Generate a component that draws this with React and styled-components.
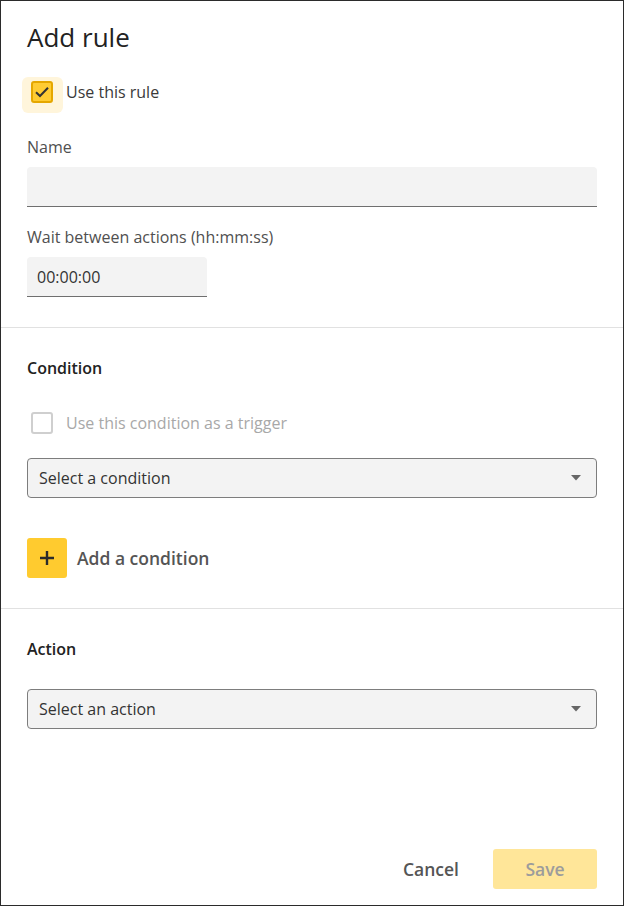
import React from 'react';
import styled, { createGlobalStyle } from 'styled-components';

const GlobalStyle = createGlobalStyle`
  html, body {
    margin: 0;
    padding: 0;
    background: #fff;
  }
  * {
    box-sizing: border-box;
  }
`;

const Dialog = styled.div`
  width: 624px;
  height: 906px;
  border: 1px solid #2b2b2b;
  display: flex;
  flex-direction: column;
  font-family: 'Open Sans', 'Noto Sans', sans-serif;
  color: #333;
  background: #fff;
`;

const Section = styled.section`
  padding: ${props => (props.first ? '18px 26px 30px' : '29px 26px 30px')};
  border-top: ${props => (props.first ? 'none' : '1px solid #e1e1e1')};
  display: flex;
  flex-direction: column;
`;

const Title = styled.h1`
  margin: 0 0 26px;
  font-size: 26px;
  line-height: 36px;
  font-weight: 400;
  color: #222;
`;

const Heading = styled.h2`
  margin: 0;
  font-size: 16px;
  line-height: 22px;
  font-weight: 600;
  color: #222;
`;

const CheckRow = styled.label`
  isolation: isolate;
  display: flex;
  align-items: center;
  gap: 13px;
  padding-left: 4px;
  height: 22px;
  font-size: 16px;
  color: ${props => (props.disabled ? '#a8a8a8' : '#3a3a3a')};
  margin-top: ${props => props.mt || 0}px;
`;

const Box = styled.span`
  position: relative;
  width: 22px;
  height: 22px;
  border-radius: 3px;
  display: flex;
  align-items: center;
  justify-content: center;
  border: 2px solid ${props => (props.checked ? '#e5a700' : '#cfcfcf')};
  background: ${props => (props.checked ? '#ffcc33' : '#fff')};

  &::before {
    content: ${props => (props.checked ? "''" : 'none')};
    position: absolute;
    top: -6px;
    left: -11px;
    right: -12px;
    bottom: -12px;
    background: #fff5db;
    border-radius: 6px;
    z-index: -1;
  }
`;

const Field = styled.div`
  display: flex;
  flex-direction: column;
  margin-top: ${props => props.mt || 0}px;
`;

const Label = styled.span`
  font-size: 16px;
  line-height: 22px;
  color: #505050;
  margin-bottom: 9px;
`;

const Input = styled.div`
  width: ${props => props.width || '100%'};
  height: 40px;
  background: #f3f3f3;
  border-radius: 4px 4px 0 0;
  border-bottom: 1px solid #6f6f6f;
  padding: 0 10px;
  display: flex;
  align-items: center;
  font-size: 16px;
  color: #333;
`;

const Select = styled.div`
  height: 40px;
  background: #f3f3f3;
  border: 1px solid #7d7d7d;
  border-radius: 4px;
  padding: 0 15px 0 11px;
  display: flex;
  align-items: center;
  justify-content: space-between;
  font-size: 16px;
  color: #333;
  margin-top: ${props => props.mt || 0}px;
`;

const AddRow = styled.div`
  display: flex;
  align-items: center;
  gap: 10px;
  margin-top: 40px;
  font-size: 17.5px;
  font-weight: 600;
  color: #555;
`;

const AddButton = styled.span`
  width: 40px;
  height: 40px;
  border-radius: 3px;
  background: #ffcb2f;
  display: flex;
  align-items: center;
  justify-content: center;
`;

const Footer = styled.div`
  margin-top: auto;
  padding: 0 26px 16px;
  display: flex;
  justify-content: flex-end;
  align-items: center;
  gap: 18px;
`;

const Button = styled.button`
  height: 40px;
  border: none;
  border-radius: 3px;
  font-family: inherit;
  font-size: 17.5px;
  font-weight: 600;
  padding: 0 16px;
  color: ${props => (props.primary ? '#9c9c9c' : '#555')};
  background: ${props => (props.primary ? '#ffe699' : 'transparent')};
  width: ${props => (props.primary ? '104px' : 'auto')};
`;

const Check = () => (
  <svg width="18" height="18" viewBox="0 0 18 18">
    <path d="M3 9.2 L7 13 L15 4.8" fill="none" stroke="#333" strokeWidth="2" />
  </svg>
);

const Caret = () => (
  <svg width="10" height="6" viewBox="0 0 10 6">
    <path d="M0 0 H10 L5 5.5 Z" fill="#666" />
  </svg>
);

const Plus = () => (
  <svg width="16" height="16" viewBox="0 0 16 16">
    <path d="M8 1 V15 M1 8 H15" stroke="#2b2b2b" strokeWidth="2.4" />
  </svg>
);

const App = () => {
  return (
    <Dialog>
      <GlobalStyle />
      <Section first>
        <Title>Add rule</Title>
        <CheckRow>
          <Box checked>
            <Check />
          </Box>
          Use this rule
        </CheckRow>
        <Field mt={33}>
          <Label>Name</Label>
          <Input />
        </Field>
        <Field mt={19}>
          <Label>Wait between actions (hh:mm:ss)</Label>
          <Input width="180px">00:00:00</Input>
        </Field>
      </Section>
      <Section>
        <Heading>Condition</Heading>
        <CheckRow disabled mt={33}>
          <Box />
          Use this condition as a trigger
        </CheckRow>
        <Select mt={24}>
          Select a condition
          <Caret />
        </Select>
        <AddRow>
          <AddButton>
            <Plus />
          </AddButton>
          Add a condition
        </AddRow>
      </Section>
      <Section>
        <Heading>Action</Heading>
        <Select mt={29}>
          Select an action
          <Caret />
        </Select>
      </Section>
      <Footer>
        <Button>Cancel</Button>
        <Button primary>Save</Button>
      </Footer>
    </Dialog>
  );
};

export default App;
